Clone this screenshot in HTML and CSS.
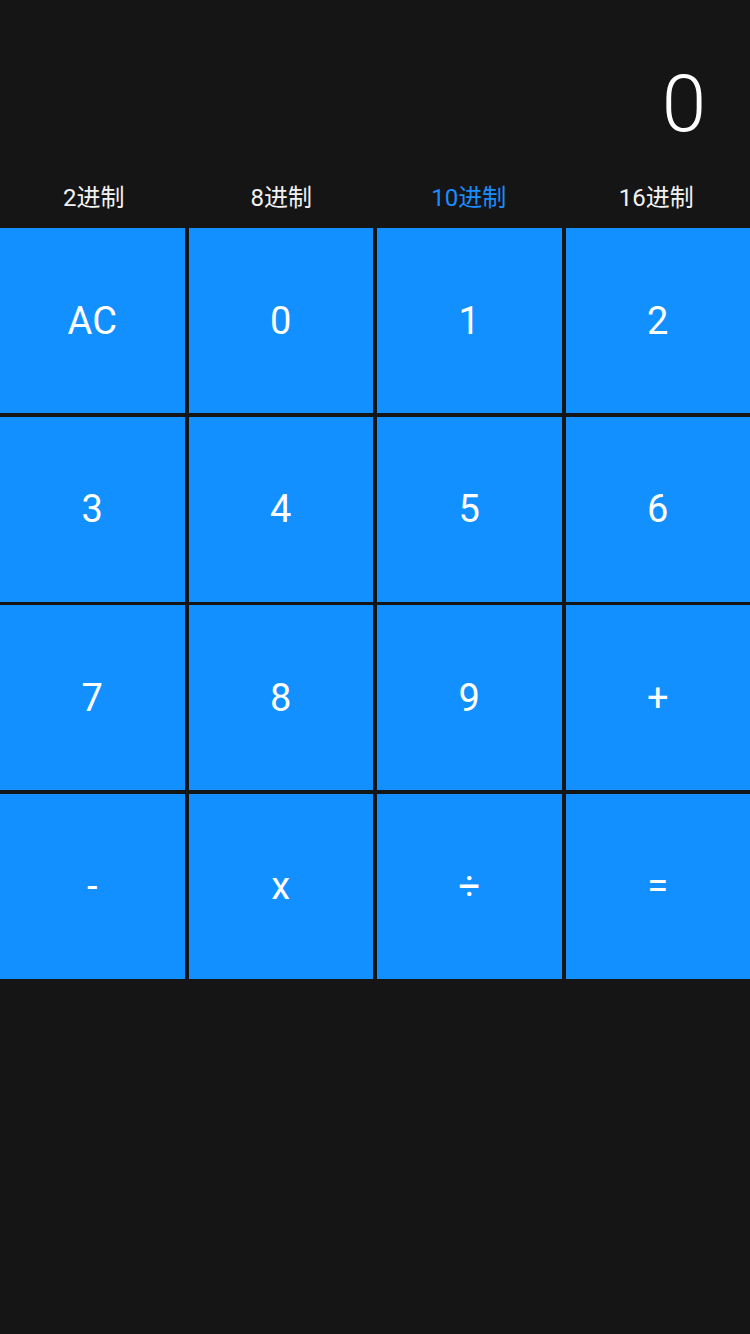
FILE: index.html
```html
<!DOCTYPE html>
<html lang="zh">
<head>
<meta charset="utf-8">
<title>Calculator</title>
<link rel="stylesheet" href="styles.css">
</head>
<body>
<div class="app">
  <div class="display">0</div>
  <div class="tabs">
    <div class="tab">2进制</div>
    <div class="tab">8进制</div>
    <div class="tab active">10进制</div>
    <div class="tab">16进制</div>
  </div>
  <div class="keys">
    <div class="key">AC</div>
    <div class="key">0</div>
    <div class="key">1</div>
    <div class="key">2</div>
    <div class="key">3</div>
    <div class="key">4</div>
    <div class="key">5</div>
    <div class="key">6</div>
    <div class="key">7</div>
    <div class="key">8</div>
    <div class="key">9</div>
    <div class="key">+</div>
    <div class="key">-</div>
    <div class="key">x</div>
    <div class="key">÷</div>
    <div class="key">=</div>
  </div>
</div>
</body>
</html>
```
FILE: styles.css
```css
html, body {
  margin: 0;
  padding: 0;
  background: #151515;
}
body {
  width: 750px;
  height: 1334px;
  font-family: Roboto, "Noto Sans CJK SC", sans-serif;
  color: #ffffff;
}
.app {
  display: flex;
  flex-direction: column;
}
.display {
  height: 108px;
  padding-top: 64px;
  padding-right: 44px;
  font-size: 80px;
  line-height: 80px;
  text-align: right;
  font-weight: 300;
}
.tabs {
  display: grid;
  grid-template-columns: repeat(4, 1fr);
  height: 56px;
}
.tab {
  display: flex;
  align-items: center;
  justify-content: center;
  font-size: 24px;
  color: #f2f2f2;
  padding-bottom: 10px;
}
.tab.active {
  color: #1a8dff;
}
.keys {
  display: grid;
  grid-template-columns: repeat(4, 184.5px);
  grid-auto-rows: 185px;
  column-gap: 4px;
  row-gap: 3.5px;
}
.key {
  background: #1290ff;
  display: flex;
  align-items: center;
  justify-content: center;
  font-size: 38px;
  color: #ffffff;
}
```
